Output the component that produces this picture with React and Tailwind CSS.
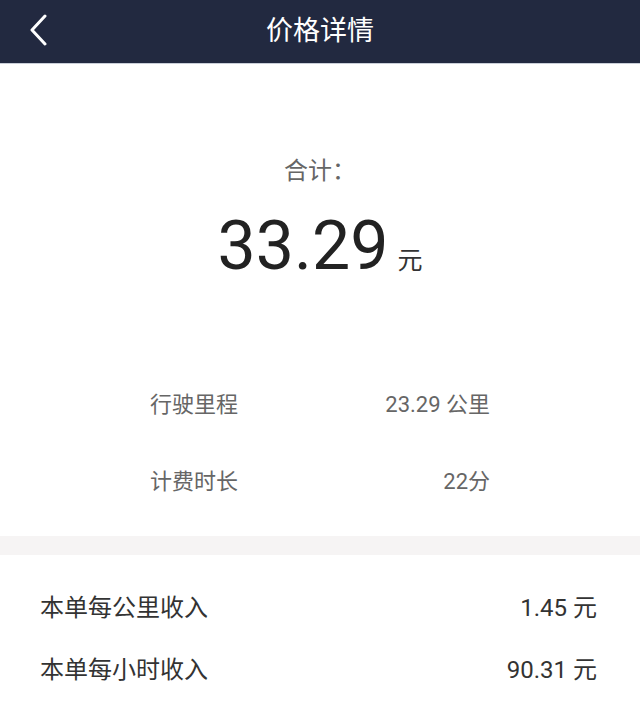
import React from 'react';

const font = { fontFamily: 'Roboto, "Noto Sans CJK SC", sans-serif' };

const App = () => {
    const tripRows = [
        { label: '行驶里程', value: '23.29 公里' },
        { label: '计费时长', value: '22分' },
    ];
    const incomeRows = [
        { label: '本单每公里收入', value: '1.45 元' },
        { label: '本单每小时收入', value: '90.31 元' },
    ];

    return (
        <div className="w-[640px] h-[719px] bg-white overflow-hidden" style={font}>
            {/* header */}
            <div className="h-16 bg-[#222940] flex items-center relative border-b border-[#c9ced8]">
                <svg className="absolute left-[28px] top-[14px]" width="22" height="32" viewBox="0 0 22 32" fill="none">
                    <path d="M17 2 L4 16 L17 30" stroke="#ffffff" strokeWidth="3" strokeLinecap="round" strokeLinejoin="round" />
                </svg>
                <div className="flex-1 text-center text-white text-[27px] leading-none">价格详情</div>
            </div>

            {/* total */}
            <div className="h-[472px] flex flex-col items-center">
                <div className="mt-[95px] text-[24px] leading-none text-[#666666]">合计：</div>
                <div className="mt-[29px] flex items-baseline text-[#222222]">
                    <span className="text-[68px] leading-none">33.29</span>
                    <span className="ml-[9px] text-[25px] leading-none text-[#333333]">元</span>
                </div>
                <div className="mt-[114px] w-[340px] flex flex-col gap-[55px]">
                    {tripRows.map((row) => (
                        <div key={row.label} className="flex justify-between text-[22px] leading-none text-[#666666]">
                            <span>{row.label}</span>
                            <span>{row.value}</span>
                        </div>
                    ))}
                </div>
            </div>

            {/* divider band */}
            <div className="h-[19px] bg-[#f6f4f4]"></div>

            {/* income */}
            <div className="pl-10 pr-[43px] pt-[41px] flex flex-col gap-[38px]">
                {incomeRows.map((row) => (
                    <div key={row.label} className="flex justify-between text-[24px] leading-none text-[#333333]">
                        <span>{row.label}</span>
                        <span>{row.value}</span>
                    </div>
                ))}
            </div>
        </div>
    );
};

export default App;
